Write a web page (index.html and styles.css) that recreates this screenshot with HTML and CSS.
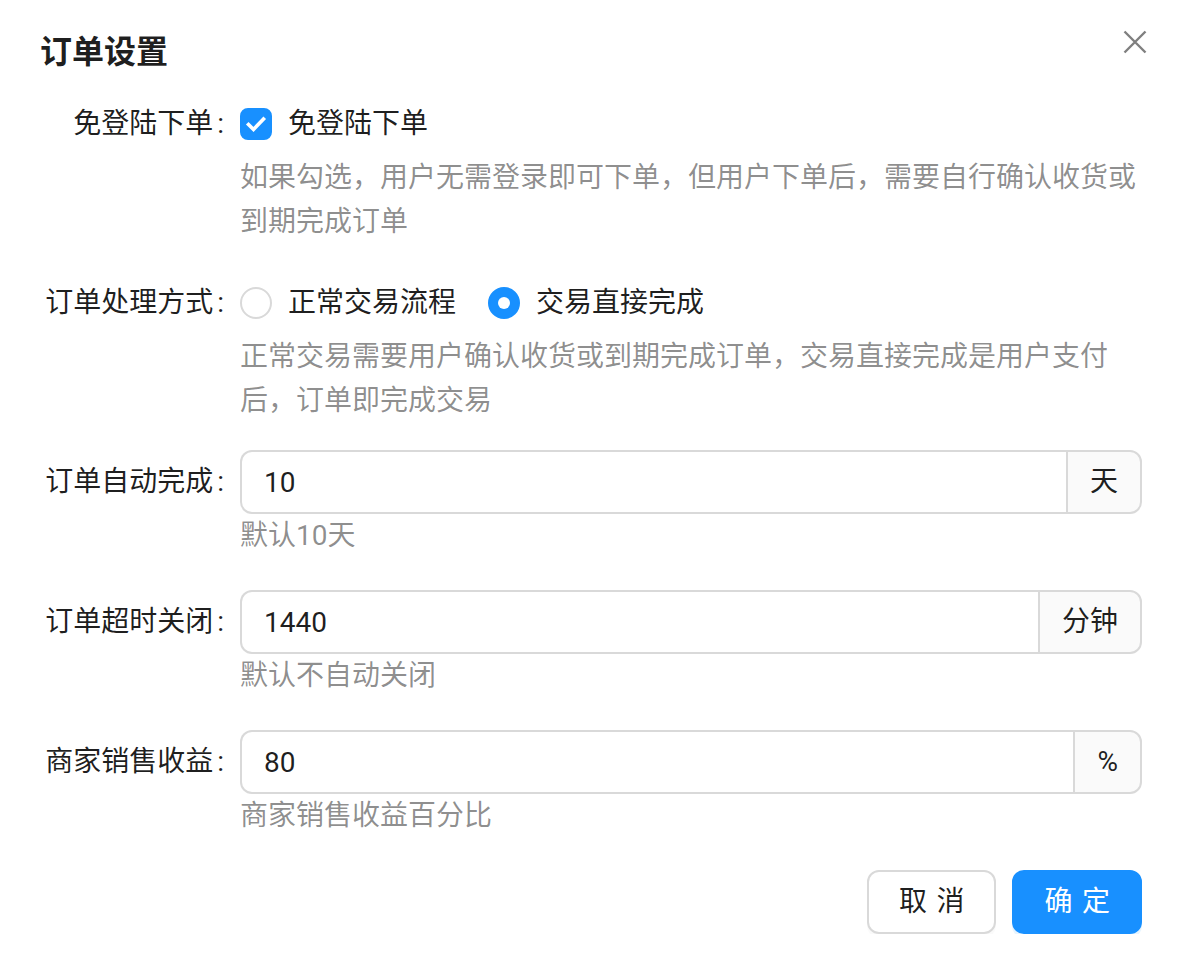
FILE: index.html
```html
<!DOCTYPE html>
<html lang="zh-CN">
<head>
<meta charset="utf-8">
<title>订单设置</title>
<link rel="stylesheet" href="styles.css">
</head>
<body>
<div class="modal">
  <div class="modal-header">
    <h2 class="modal-title">订单设置</h2>
    <button class="modal-close" type="button" aria-label="关闭">
      <svg viewBox="0 0 24 24" width="24" height="24"><path d="M1.5 1.5L22.5 22.5M22.5 1.5L1.5 22.5" stroke="currentColor" stroke-width="2.4" fill="none"/></svg>
    </button>
  </div>

  <form class="form">
    <div class="form-item form-item-wide-help">
      <div class="form-label">免登陆下单</div>
      <div class="form-control">
        <div class="control-row">
          <label class="choice">
            <span class="checkbox is-checked">
              <svg viewBox="0 0 32 32" width="32" height="32"><path d="M8.5 16.5L13.5 21.5L23.5 11" stroke="#fff" stroke-width="3.6" fill="none" stroke-linecap="square"/></svg>
            </span>
            <span class="choice-text">免登陆下单</span>
          </label>
        </div>
        <div class="form-help">如果勾选，用户无需登录即可下单，但用户下单后，需要自行确认收货或到期完成订单</div>
      </div>
    </div>

    <div class="form-item form-item-wide-help">
      <div class="form-label">订单处理方式</div>
      <div class="form-control">
        <div class="control-row">
          <label class="choice">
            <span class="radio"></span>
            <span class="choice-text">正常交易流程</span>
          </label>
          <label class="choice">
            <span class="radio is-checked"></span>
            <span class="choice-text">交易直接完成</span>
          </label>
        </div>
        <div class="form-help">正常交易需要用户确认收货或到期完成订单，交易直接完成是用户支付后，订单即完成交易</div>
      </div>
    </div>

    <div class="form-item">
      <div class="form-label">订单自动完成</div>
      <div class="form-control">
        <div class="input-group">
          <input class="input" type="text" value="10">
          <span class="input-addon">天</span>
        </div>
        <div class="form-help">默认10天</div>
      </div>
    </div>

    <div class="form-item">
      <div class="form-label">订单超时关闭</div>
      <div class="form-control">
        <div class="input-group">
          <input class="input" type="text" value="1440">
          <span class="input-addon">分钟</span>
        </div>
        <div class="form-help">默认不自动关闭</div>
      </div>
    </div>

    <div class="form-item">
      <div class="form-label">商家销售收益</div>
      <div class="form-control">
        <div class="input-group">
          <input class="input" type="text" value="80">
          <span class="input-addon">%</span>
        </div>
        <div class="form-help">商家销售收益百分比</div>
      </div>
    </div>
  </form>

  <div class="modal-footer">
    <button class="btn" type="button"><span>取消</span></button>
    <button class="btn btn-primary" type="button"><span>确定</span></button>
  </div>
</div>
</body>
</html>
```

FILE: styles.css
```css
* {
  box-sizing: border-box;
}

html, body {
  margin: 0;
  background: #fff;
}

body {
  font-family: Roboto, "Noto Sans CJK SC", sans-serif;
  font-size: 28px;
  line-height: 44px;
  color: rgba(0, 0, 0, 0.88);
}

.modal {
  padding: 30px 44px 0 40px;
}

/* header: title on the left, close icon on the right */
.modal-header {
  display: flex;
  justify-content: space-between;
  align-items: flex-start;
  margin-bottom: 18px;
}

.modal-title {
  margin: 0;
  font-size: 32px;
  line-height: 44px;
  font-weight: 600;
  color: rgba(0, 0, 0, 0.88);
}

.modal-close {
  margin: 0 -5px 0 0;
  padding: 0;
  border: 0;
  background: none;
  width: 24px;
  height: 24px;
  color: rgba(0, 0, 0, 0.5);
  cursor: pointer;
}

.modal-close svg {
  display: block;
}

/* form rows: label column + control column */
.form-item {
  display: grid;
  grid-template-columns: 200px 1fr;
  margin-bottom: 32px;
}

.form-item-wide-help {
  margin-bottom: 27px;
}

.form-label {
  height: 64px;
  display: flex;
  align-items: center;
  justify-content: flex-end;
  white-space: nowrap;
}

.form-label::after {
  content: ":";
  margin: 0 16px 0 4px;
}

.form-control {
  min-width: 0;
}

.control-row {
  min-height: 64px;
  display: flex;
  align-items: center;
}

.form-help {
  color: rgba(0, 0, 0, 0.45);
  line-height: 44px;
}

/* checkbox & radio */
.choice {
  display: inline-flex;
  align-items: center;
  margin-right: 16px;
  cursor: pointer;
}

.choice-text {
  padding: 0 16px;
}

.checkbox {
  width: 32px;
  height: 32px;
  border-radius: 8px;
  border: 2px solid #d9d9d9;
  display: flex;
  align-items: center;
  justify-content: center;
}

.checkbox.is-checked {
  background: #1890ff;
  border-color: #1890ff;
}

.checkbox svg {
  display: block;
  flex: none;
}

.radio {
  width: 32px;
  height: 32px;
  border-radius: 50%;
  border: 2px solid #d9d9d9;
  background: #fff;
  display: flex;
  align-items: center;
  justify-content: center;
}

.radio.is-checked {
  background: #1890ff;
  border-color: #1890ff;
}

.radio.is-checked::after {
  content: "";
  width: 12px;
  height: 12px;
  border-radius: 50%;
  background: #fff;
}

/* input with trailing addon */
.input-group {
  display: flex;
  height: 64px;
}

.input {
  flex: 1;
  min-width: 0;
  height: 64px;
  margin: 0;
  padding: 8px 22px;
  border: 2px solid #d9d9d9;
  border-right: 0;
  border-radius: 12px 0 0 12px;
  font: inherit;
  color: rgba(0, 0, 0, 0.88);
  background: #fff;
  outline: none;
}

.input-addon {
  display: flex;
  align-items: center;
  padding: 0 22px;
  border: 2px solid #d9d9d9;
  border-radius: 0 12px 12px 0;
  background: #fafafa;
  white-space: nowrap;
}

/* footer buttons */
.modal-footer {
  display: flex;
  justify-content: flex-end;
  gap: 16px;
}

.btn {
  height: 64px;
  padding: 8px 30px;
  border: 2px solid #d9d9d9;
  border-radius: 12px;
  background: #fff;
  color: rgba(0, 0, 0, 0.88);
  font: inherit;
  line-height: 44px;
  white-space: nowrap;
  box-shadow: 0 4px 0 rgba(0, 0, 0, 0.02);
  cursor: pointer;
}

.btn span {
  letter-spacing: 0.34em;
  margin-right: -0.34em;
}

.btn-primary {
  background: #1890ff;
  border-color: #1890ff;
  color: #fff;
  box-shadow: 0 4px 0 rgba(5, 145, 255, 0.1);
}
```
